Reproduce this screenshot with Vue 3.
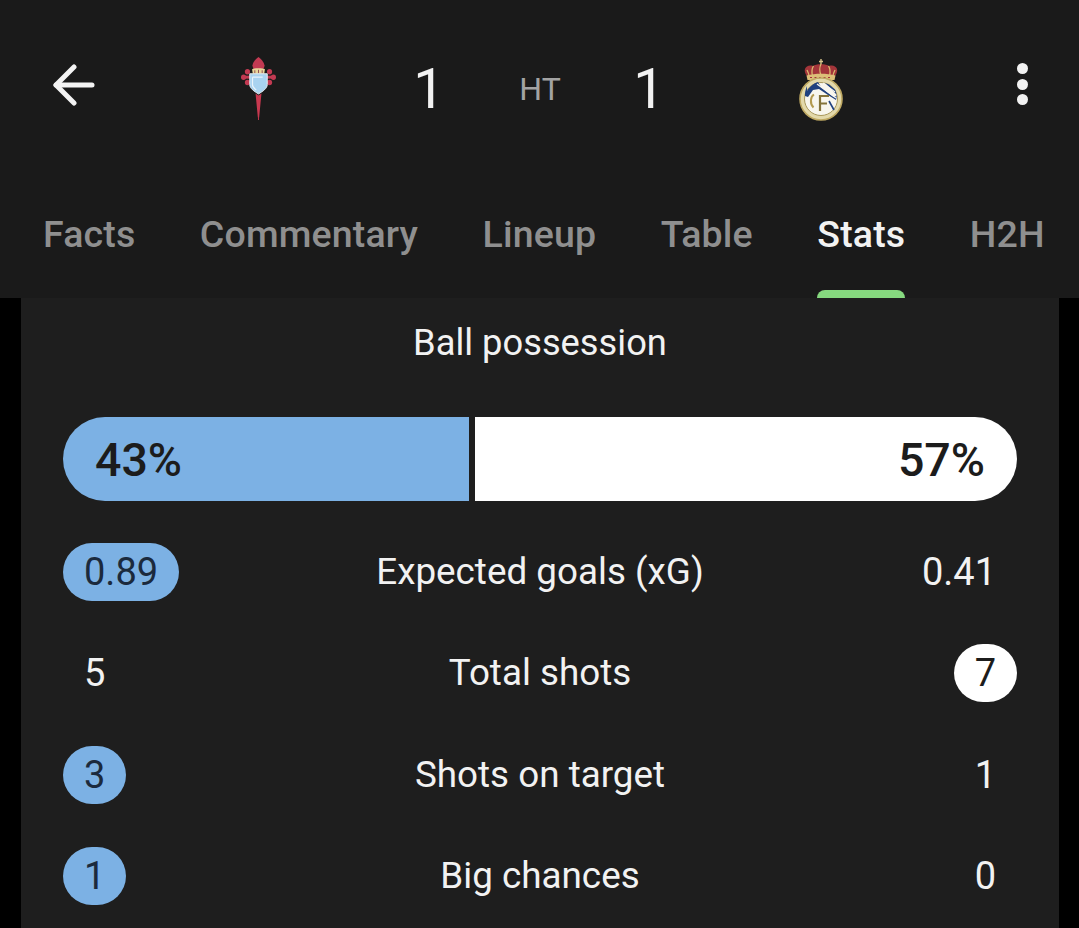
<script setup>
const tabs = [
  { label: 'Facts' },
  { label: 'Commentary' },
  { label: 'Lineup' },
  { label: 'Table' },
  { label: 'Stats', active: true },
  { label: 'H2H' },
]
const rows = [
  { name: 'Expected goals (xG)', home: '0.89', away: '0.41', win: 'home' },
  { name: 'Total shots', home: '5', away: '7', win: 'away' },
  { name: 'Shots on target', home: '3', away: '1', win: 'home' },
  { name: 'Big chances', home: '1', away: '0', win: 'home' },
]
</script>

<template>
  <div class="screen">
    <header class="header">
      <div class="score-row">
        <div class="back">
          <svg width="46" height="42" viewBox="0 0 46 42" fill="none" stroke="#f3f3f3" stroke-width="5" stroke-linecap="round" stroke-linejoin="round">
            <path d="M41 21H5" />
            <path d="M23 3 5 21l18 18" />
          </svg>
        </div>
        <div class="crest celta">
          <svg width="35" height="63" viewBox="0 0 38 64" preserveAspectRatio="none">
            <path d="M19 0c3 2 6 5 6.500 8.500 0 2-1 3.500-2 4.500h-9c-1-1-2-2.500-2-4.500C13 5 16 2 19 0z" fill="#c23a52" />
            <g fill="#c23a52">
              <circle cx="7" cy="15" r="2.800" />
              <circle cx="2.800" cy="20.500" r="2.800" />
              <circle cx="7" cy="26" r="2.800" />
              <rect x="4" y="19" width="8" height="3" />
              <circle cx="31" cy="15" r="2.800" />
              <circle cx="35.200" cy="20.500" r="2.800" />
              <circle cx="31" cy="26" r="2.800" />
              <rect x="26" y="19" width="8" height="3" />
            </g>
            <path d="M12 12.500c2-1.500 12-1.500 14 0l-.8 4.500H12.800z" fill="#e8d79a" />
            <path d="M15 13.500v3M19 13v3.500M23 13.500v3" stroke="#8f4a55" stroke-width="1" />
            <path d="M9.500 17h19v11c0 4-5 7-9.500 9.500-4.500-2.500-9.500-5.500-9.500-9.500z" fill="#a9d3f0" stroke="#e8eef2" stroke-width="1" />
            <path d="M12.500 20.500h11M12.500 20.500v8c0 2 2 3.500 4 5" fill="none" stroke="#e9f4fb" stroke-width="1.300" />
            <path d="M15.800 37l3.200 2 3.200-2L19.700 61.500h-1.400z" fill="#c8384f" />
            <path d="M19 61v3" stroke="#c8384f" stroke-width="1" />
          </svg>
        </div>
        <div class="goal">1</div>
        <div class="status">HT</div>
        <div class="goal">1</div>
        <div class="crest real">
          <svg width="46" height="62" viewBox="0 0 46 62">
            <path d="M23 0v6M21 2.500h4" stroke="#d9c68c" stroke-width="1.400" />
            <path d="M9 17C4 11 8 5 15 7c2-2.500 14-2.500 16 0 7-2 11 4 6 10z" fill="#a3353a" />
            <path d="M23 5c-1.500 3-1.500 8 0 11M15.500 7c-2 3-2 6-1 10M30.500 7c2 3 2 6 1 10M9 11c1 2 2 4 2 6M37 11c-1 2-2 4-2 6" stroke="#d9b76e" stroke-width="1.300" fill="none" />
            <path d="M8.500 16.500c9-2.500 20-2.500 29 0l-1 4.500h-27z" fill="#dcbf78" />
            <path d="M12 18.500h22" stroke="#a3353a" stroke-width="1.200" stroke-dasharray="2 2.500" />
            <circle cx="23" cy="40" r="21" fill="#e3d9ab" stroke="#bfa963" stroke-width="1.600" />
            <circle cx="23" cy="40" r="16.500" fill="#f8f6ee" stroke="#a9985c" stroke-width="1" />
            <path d="M9 32c2-4 7-8 11-9l3 5 6 5 6.500 5 3-1c0-2.500-.5-4.500-1.500-6.500L31 25.500 27 24l12 12-1 5-8-5-9-6-6 1-5 7-3-1c-.5-3 .5-6 2-10z" fill="#20417f" />
            <path d="M19 25l19 14M25 24l12 9" stroke="#f8f6ee" stroke-width="1.300" />
            <path d="M16 35.500c-3.500 2-4.500 9-.5 13" fill="none" stroke="#b39a50" stroke-width="2" />
            <path d="M22 52V37h9M22 44.500h7" fill="none" stroke="#84733a" stroke-width="2.200" />
            <path d="M31 42l5 9" stroke="#20417f" stroke-width="1.600" />
          </svg>
        </div>
        <div class="more">
          <span class="dot"></span>
          <span class="dot"></span>
          <span class="dot"></span>
        </div>
      </div>
      <nav class="tabs">
        <div v-for="t in tabs" :key="t.label" class="tab" :class="{ active: t.active }">
          {{ t.label }}
          <span v-if="t.active" class="indicator"></span>
        </div>
      </nav>
    </header>

    <main class="card">
      <h2 class="title">Ball possession</h2>
      <div class="bar">
        <div class="seg home">43%</div>
        <div class="seg away">57%</div>
      </div>
      <div class="rows">
        <div v-for="r in rows" :key="r.name" class="row">
          <div class="side">
            <span class="val" :class="{ 'win-home': r.win === 'home' }">{{ r.home }}</span>
          </div>
          <div class="name">{{ r.name }}</div>
          <div class="side right">
            <span class="val" :class="{ 'win-away': r.win === 'away' }">{{ r.away }}</span>
          </div>
        </div>
      </div>
    </main>
  </div>
</template>

<style>
html, body { margin: 0; background: #000; }
</style>

<style scoped>
.screen {
  width: 1079px;
  height: 928px;
  overflow: hidden;
  background: #000;
  font-family: Roboto, "Liberation Sans", sans-serif;
  color: #f2f2f2;
}
.header {
  height: 298px;
  background: #1a1a1a;
  display: flex;
  flex-direction: column;
  box-sizing: border-box;
}
.score-row {
  display: grid;
  grid-template-columns: 148px 220px 122px 100px 118px 226px 145px;
  align-items: center;
  height: 178px;
}
.back { padding-left: 51px; height: 42px; margin-top: -8px; }
.back svg { display: block; }
.crest { display: flex; justify-content: center; }
.crest.celta { margin-top: -1px; }
.crest.real { margin-top: 1px; }
.crest svg { display: block; }
.goal {
  font-size: 56px;
  line-height: 64px;
  text-align: center;
  color: #f2f2f2;
}
.status {
  font-size: 32px;
  line-height: 40px;
  text-align: center;
  color: #a3a3a3;
}
.more {
  display: flex;
  flex-direction: column;
  align-items: center;
  gap: 4.500px;
  padding-left: 32px;
  margin-top: -10px;
}
.dot { width: 11px; height: 11px; border-radius: 50%; background: #f2f2f2; }
.tabs {
  display: flex;
  gap: 64.500px;
  padding-left: 43px;
  height: 120px;
  white-space: nowrap;
}
.tab {
  position: relative;
  font-size: 37.500px;
  letter-spacing: 0.150px;
  font-weight: 500;
  line-height: 112px;
  height: 120px;
  color: #8f8f8f;
}
.tab.active { color: #f2f2f2; }
.indicator {
  position: absolute;
  left: 0;
  right: 0;
  bottom: 0;
  height: 8px;
  background: #86d97f;
  border-radius: 8px 8px 0 0;
}
.card {
  width: 1038px;
  height: 630px;
  margin-left: 21px;
  background: #1e1e1e;
  box-sizing: border-box;
  padding: 0 42px;
}
.title {
  margin: 0;
  font-size: 36.300px;
  font-weight: 400;
  line-height: 44px;
  padding-top: 23px;
  text-align: center;
  color: #f2f2f2;
}
.bar {
  display: flex;
  gap: 6px;
  height: 84px;
  margin-top: 52px;
}
.seg {
  display: flex;
  align-items: center;
  font-size: 46.500px;
  font-weight: 500;
  color: #1c1c1c;
  box-sizing: border-box;
  padding-top: 2px;
}
.seg.home {
  width: 406px;
  background: #7cb1e4;
  border-radius: 42px 0 0 42px;
  padding-left: 32px;
}
.seg.away {
  flex: 1;
  justify-content: flex-end;
  background: #fff;
  border-radius: 0 42px 42px 0;
  padding-right: 32px;
}
.rows {
  display: flex;
  flex-direction: column;
  gap: 43.300px;
  margin-top: 41px;
}
.row {
  display: grid;
  grid-template-columns: 1fr auto 1fr;
  align-items: center;
  height: 58px;
}
.side { display: flex; }
.side.right { justify-content: flex-end; }
.val {
  min-width: 63px;
  height: 58px;
  line-height: 58px;
  box-sizing: border-box;
  padding: 0 21px;
  border-radius: 29px;
  text-align: center;
  font-size: 38px;
}
.win-home { background: #7cb1e4; color: #1b2a3d; }
.win-away { background: #fff; color: #1c1c1c; }
.name { font-size: 36.800px; line-height: 60px; text-align: center; color: #f2f2f2; }
</style>
